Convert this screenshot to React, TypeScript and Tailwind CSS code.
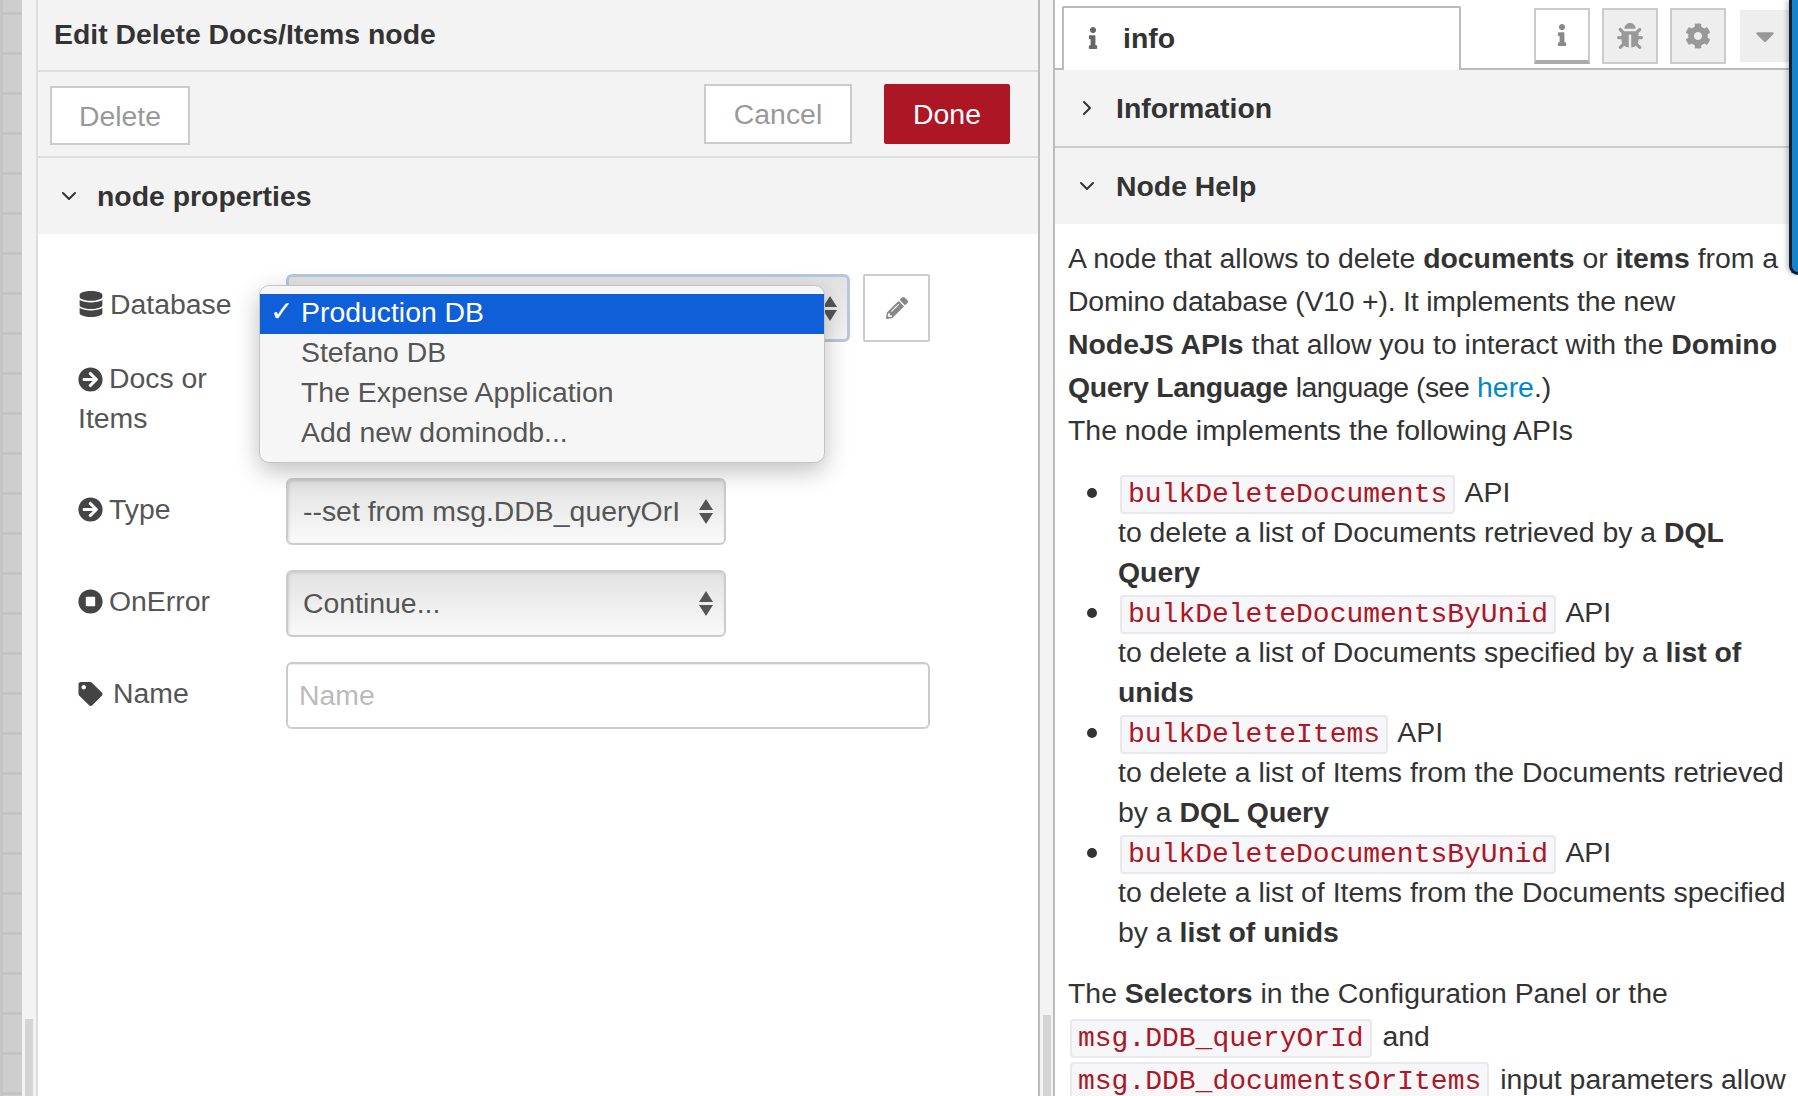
import React from 'react';
import { ChevronDown, ChevronRight } from 'lucide-react';
import { FaArrowCircleRight, FaBug, FaCaretDown, FaCog, FaDatabase, FaInfo, FaPencilAlt, FaStopCircle, FaTag } from 'react-icons/fa';

const Code = ({ children }: { children: React.ReactNode }) => (
  <code className="mr-[3px] ml-[2px] rounded-[4px] border-2 border-[#e8e8ee] bg-[#f7f7f9] px-[6px] py-[2px] font-['Liberation_Mono',monospace] text-[28px] leading-none whitespace-nowrap text-[#ad1625]">
    {children}
  </code>
);

const Spinner = () => (
  <span className="flex flex-col gap-[3px]">
    <span className="h-0 w-0 border-x-[7px] border-b-[11px] border-x-transparent border-b-[#555]" />
    <span className="h-0 w-0 border-x-[7px] border-t-[11px] border-x-transparent border-t-[#555]" />
  </span>
);

const FakeSelect = ({ label }: { label: string }) => (
  <div className="flex h-[67px] w-[440px] items-center justify-between rounded-[6px] border-2 border-[#ccc] bg-gradient-to-b from-[#e2e2e2] to-[#fafafa] pr-[11px] pl-[15px] text-[#555] shadow-[inset_1px_1px_3px_rgba(0,0,0,0.12)]">
    <span>{label}</span>
    <Spinner />
  </div>
);

const FormRow = ({ icon, label, children, className }: { icon: React.ReactNode; label: string; children: React.ReactNode; className: string }) => (
  <div className={`flex ${className}`}>
    <label className="flex w-[208px] items-center gap-[6px] pb-[4px] text-[#555]">
      {icon}
      {label}
    </label>
    {children}
  </div>
);

const menuItems = ['Production DB', 'Stefano DB', 'The Expense Application', 'Add new dominodb...'];

const listItems = [
  { api: 'bulkDeleteDocuments', text: <>to delete a list of Documents retrieved by a <b>DQL<br />Query</b></> },
  { api: 'bulkDeleteDocumentsByUnid', text: <>to delete a list of Documents specified by a <b>list of<br />unids</b></> },
  { api: 'bulkDeleteItems', text: <>to delete a list of Items from the Documents retrieved<br />by a <b>DQL Query</b></> },
  { api: 'bulkDeleteDocumentsByUnid', text: <>to delete a list of Items from the Documents specified<br />by a <b>list of unids</b></> },
];

export default function App() {
  return (
    <div className="flex h-[1096px] w-[1798px] overflow-hidden bg-white font-['Liberation_Sans',Arial,sans-serif] text-[28.4px] text-[#333]">
      {/* Canvas edge */}
      <div className="w-[22px] shrink-0 bg-[#cecece] bg-[linear-gradient(#c4c4c4_3px,transparent_3px),linear-gradient(90deg,#c4c4c4_3px,transparent_3px)] bg-[size:40px_40px] bg-[position:0_12px]" />
      <div className="flex w-[16px] shrink-0 flex-col justify-end border-r-2 border-[#ddd] bg-[#f3f3f3]">
        <div className="ml-[3px] h-[77px] w-[8px] bg-[#d4d4d4]" />
      </div>

      {/* Edit panel */}
      <div className="flex w-[1000px] shrink-0 flex-col">
        <div className="flex h-[72px] shrink-0 items-center border-b-2 border-[#ddd] bg-[#f3f3f3] pb-[2px] pl-[16px] font-bold">
          Edit Delete Docs/Items node
        </div>
        <div className="flex h-[86px] shrink-0 items-center justify-between border-b-2 border-[#ddd] bg-[#f3f3f3] pr-[28px] pl-[12px]">
          <button className="mt-[2px] h-[59px] w-[140px] border-2 border-[#ccc] bg-white pt-[2px] text-[#999]">Delete</button>
          <div className="flex gap-[32px]">
            <button className="h-[60px] w-[148px] border-2 border-[#ccc] bg-white text-[#999]">Cancel</button>
            <button className="h-[60px] w-[126px] rounded-[2px] bg-[#ad1625] text-white">Done</button>
          </div>
        </div>
        <div className="flex h-[76px] shrink-0 items-center gap-[16px] bg-[#f3f3f3] pl-[19px] font-bold">
          <ChevronDown className="h-[24px] w-[24px] text-[#333]" strokeWidth={2} />
          node properties
        </div>

        <div className="relative flex flex-col pt-[40px] pl-[40px]">
          <div className="flex">
            <label className="flex w-[208px] items-center gap-[6px] self-start pt-[9px] text-[#555]">
              <FaDatabase className="h-[26px] w-[26px] text-[#444]" />
              Database
            </label>
            <div className="flex h-[68px] w-[564px] items-center justify-end rounded-[6px] border-[3px] border-[#b7c7dd] bg-gradient-to-b from-[#e2e2e2] to-[#f4f4f4] pr-[10px]">
              <Spinner />
            </div>
            <button className="ml-[13px] flex h-[68px] w-[67px] items-center justify-center rounded-[2px] border-2 border-[#ccc] bg-white">
              <FaPencilAlt className="h-[22px] w-[22px] text-[#888]" />
            </button>
          </div>

          <div className="mt-[16px] flex">
            <label className="w-[190px] leading-[40px] text-[#555]">
              <FaArrowCircleRight className="mr-[6px] inline-block h-[25px] w-[25px] align-[-4px] text-[#444]" />
              Docs or Items
            </label>
          </div>

          <FormRow className="mt-[40px]" icon={<FaArrowCircleRight className="h-[25px] w-[25px] text-[#444]" />} label="Type">
            <FakeSelect label="--set from msg.DDB_queryOrI" />
          </FormRow>
          <FormRow className="mt-[25px]" icon={<FaStopCircle className="h-[25px] w-[25px] text-[#444]" />} label="OnError">
            <FakeSelect label="Continue..." />
          </FormRow>
          <FormRow className="mt-[25px]" icon={<FaTag className="mr-[4px] h-[24px] w-[25px] text-[#444]" />} label="Name">
            <input
              placeholder="Name"
              className="h-[67px] w-[644px] rounded-[6px] border-2 border-[#ccc] bg-white px-[11px] shadow-[inset_0_1px_1px_rgba(0,0,0,0.075)] placeholder:text-[#bbb]"
            />
          </FormRow>

          {/* Open select menu */}
          <div className="absolute top-[51px] left-[221px] h-[178px] w-[566px] rounded-[10px] border border-[#c4c4c4] bg-[#f6f6f6] py-[8px] text-[#555] shadow-[0_8px_24px_rgba(0,0,0,0.25)]">
            {menuItems.map((item, i) => (
              <div
                key={item}
                className={`relative h-[40px] pl-[41px] leading-[36px] ${i === 0 ? 'bg-[#0e5fd8] text-white' : ''}`}
              >
                {i === 0 && <span className="absolute left-[10px] font-['DejaVu_Sans',sans-serif] text-[28px] font-bold">✓</span>}
                {item}
              </div>
            ))}
          </div>
        </div>
      </div>

      {/* Separator */}
      <div className="flex w-[17px] shrink-0 flex-col justify-end border-x-2 border-[#bbb] bg-[#f3f3f3]">
        <div className="ml-[3px] h-[81px] w-[8px] bg-[#d4d4d4]" />
      </div>

      {/* Sidebar */}
      <div className="relative min-w-0 flex-1">
        <div className="flex h-[70px] items-end border-b-2 border-[#bbb] pl-[7px]">
          <div className="-mb-[2px] flex h-[64px] w-[399px] items-center gap-[23px] rounded-t-[2px] border-x-2 border-t-2 border-[#bbb] border-b-white bg-white pb-[2px] pl-[22px]">
            <FaInfo className="h-[22px] w-[14px] text-[#666]" />
            <span className="font-bold">info</span>
          </div>
          <div className="ml-[73px] flex items-start gap-[12px] self-start pt-[8px]">
            <span className="flex h-[56px] w-[56px] items-center justify-center border-2 border-b-[4px] border-[#ccc] border-b-[#aaa] bg-white text-[#888]">
              <FaInfo className="h-[22px] w-[14px]" />
            </span>
            <span className="flex h-[56px] w-[56px] items-center justify-center border-2 border-[#ccc] bg-[#eee] text-[#999]">
              <FaBug className="h-[26px] w-[26px]" />
            </span>
            <span className="flex h-[56px] w-[56px] items-center justify-center border-2 border-[#ccc] bg-[#eee] text-[#999]">
              <FaCog className="h-[26px] w-[26px]" />
            </span>
            <span className="mt-[2px] ml-[2px] flex h-[52px] w-[50px] items-center justify-center bg-[#eee] text-[#999]">
              <FaCaretDown className="h-[30px] w-[30px]" />
            </span>
          </div>
        </div>

        <div className="flex h-[78px] items-center gap-[17px] border-b-2 border-[#ccc] bg-[#f3f3f3] pl-[20px] font-bold">
          <ChevronRight className="h-[24px] w-[24px]" strokeWidth={2} />
          Information
        </div>
        <div className="flex h-[76px] items-center gap-[17px] bg-[#f3f3f3] pl-[20px] font-bold">
          <ChevronDown className="h-[24px] w-[24px]" strokeWidth={2} />
          Node Help
        </div>

        <div className="pt-[13px] pl-[13px] leading-[43px]">
          <p>
            A node that allows to delete <b>documents</b> or <b>items</b> from a<br />
            <span className="tracking-[-0.2px]">Domino database (V10 +). It implements the new</span><br />
            <b>NodeJS APIs</b> that allow you to interact with the <b>Domino</b><br />
            <b className="tracking-[-0.3px]">Query Language</b> <span className="tracking-[-0.5px]">language (see</span> <a className="text-[#0088cc]">here</a>.)
          </p>
          <p>The node implements the following APIs</p>
          <ul className="mt-[20px] list-none pl-[50px] leading-[40px]">
            {listItems.map((item, i) => (
              <li key={i} className="relative">
                <span className="absolute top-[16px] -left-[31px] h-[10px] w-[10px] rounded-full bg-[#333]" />
                <Code>{item.api}</Code> API
                <br />
                {item.text}
              </li>
            ))}
          </ul>
          <p className="mt-[20px]">
            The <b>Selectors</b> in the Configuration Panel or the<br />
            <Code>msg.DDB_queryOrId</Code> and<br />
            <Code>msg.DDB_documentsOrItems</Code> input parameters allow
          </p>
        </div>

        {/* Blue edge of the window behind */}
        <div className="absolute top-0 right-0 h-[275px] w-[9px] rounded-bl-[10px] border-b-[3px] border-l-[3px] border-[#14202c] bg-[#1285d0] shadow-[-2px_0_5px_rgba(0,0,0,0.25)]" />
      </div>
    </div>
  );
}
